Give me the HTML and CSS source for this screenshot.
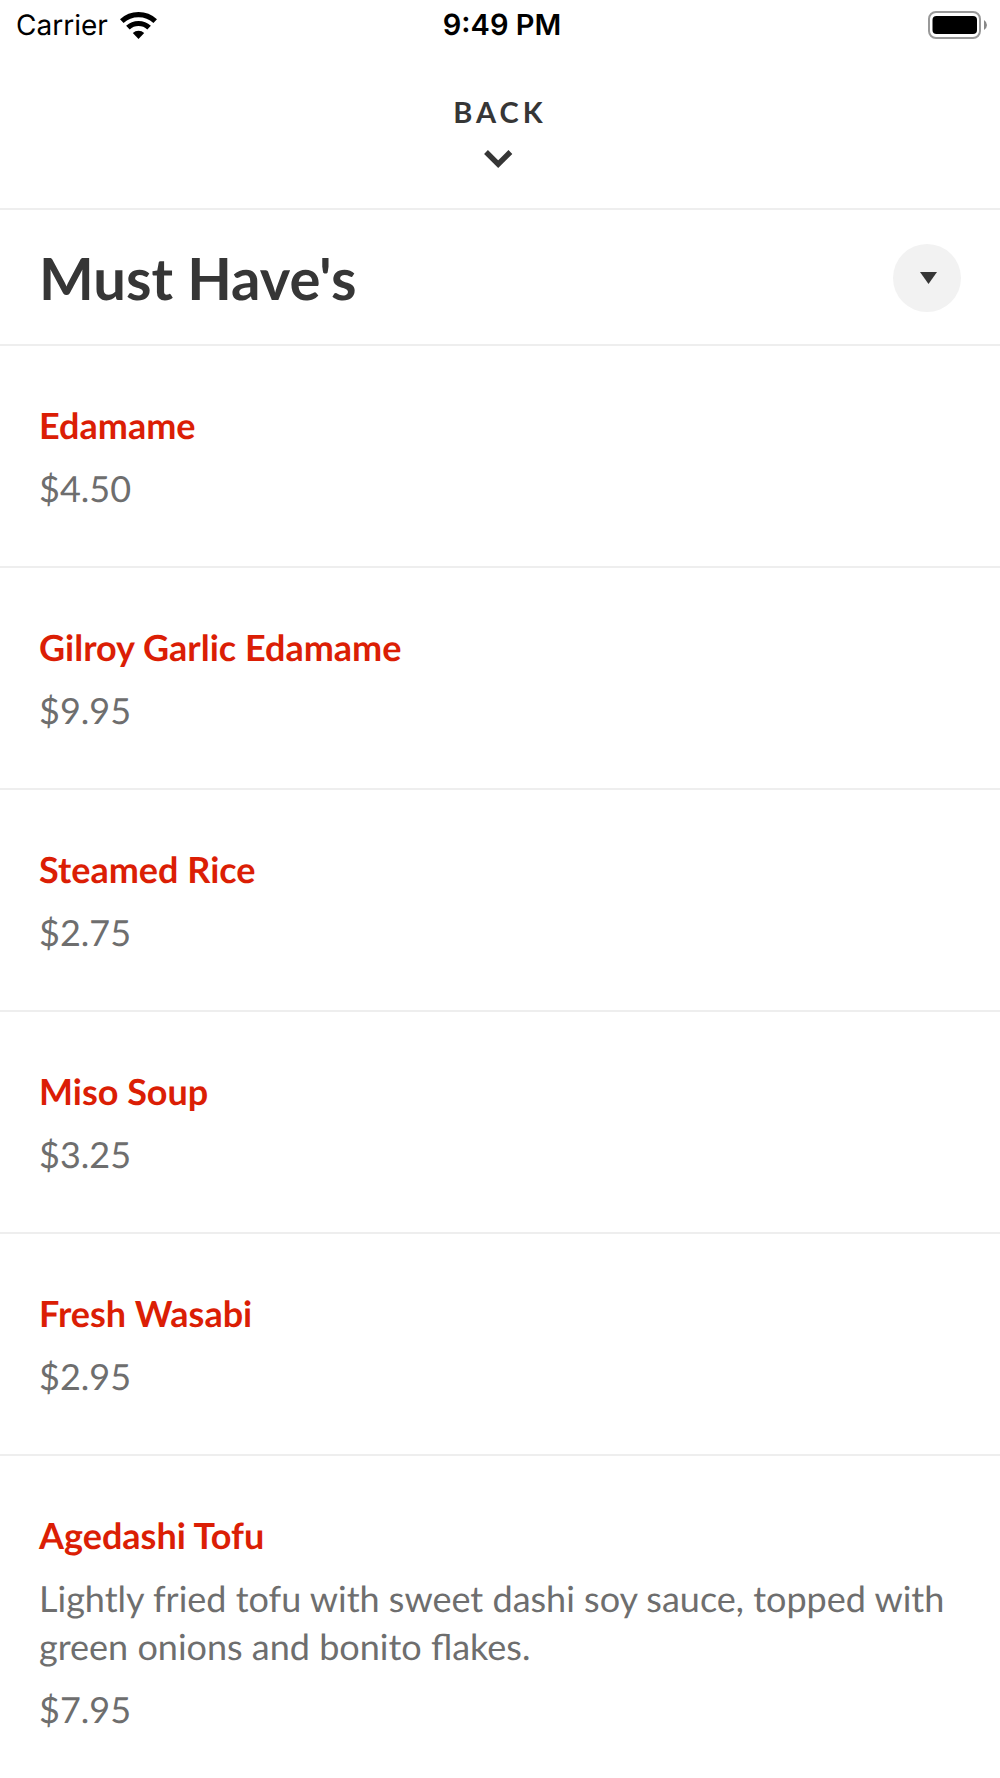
FILE: index.html
```html
<!DOCTYPE html>
<html lang="en">
<head>
<meta charset="utf-8">
<meta name="viewport" content="width=device-width, initial-scale=1">
<title>Must Have's</title>
<link rel="stylesheet" href="styles.css">
</head>
<body>
<div class="status">
  <div class="status-left">
    <span class="carrier">Carrier</span>
    <svg class="wifi" viewBox="0 0 37 27" aria-hidden="true"><path d="M1.800 9.100A24.500 24.500 0 0 1 35.200 9.100M7.900 15.700A15.500 15.500 0 0 1 29.100 15.700" fill="none" stroke="#000" stroke-width="5.200"/><path d="M12.800 20.900A8.300 8.300 0 0 1 24.200 20.900L18.500 27z"/></svg>
  </div>
  <span class="clock">9:49 PM</span>
  <svg class="battery" viewBox="0 0 60 28" aria-hidden="true"><rect x="1" y="1" width="51" height="26" rx="7" fill="none" stroke="#999" stroke-width="2"/><rect x="4.500" y="5" width="44.500" height="18" rx="4"/><path d="M56 9q3 2 3 5t-3 5z" fill="#888"/></svg>
</div>
<header class="top">
  <button class="back" type="button">
    <span class="back-label">BACK</span>
    <svg class="chevron" viewBox="0 0 32 18" aria-hidden="true"><path d="M2 2l12.200 12.200L26.400 2" fill="none" stroke="#363636" stroke-width="5.400"/></svg>
  </button>
</header>
<main>
  <div class="section">
    <h1 class="title">Must Have's</h1>
    <button class="toggle" type="button" aria-label="Choose section"><svg class="caret" viewBox="0 0 20 12" aria-hidden="true"><path d="M3 0h17l-8.500 12z" fill="#363636"/></svg></button>
  </div>
  <ul class="menu">
    <li class="item"><h2 class="name">Edamame</h2><p class="price">$4.50</p></li>
    <li class="item"><h2 class="name">Gilroy Garlic Edamame</h2><p class="price">$9.95</p></li>
    <li class="item"><h2 class="name">Steamed Rice</h2><p class="price">$2.75</p></li>
    <li class="item"><h2 class="name">Miso Soup</h2><p class="price">$3.25</p></li>
    <li class="item"><h2 class="name">Fresh Wasabi</h2><p class="price">$2.95</p></li>
    <li class="item"><h2 class="name">Agedashi Tofu</h2><p class="desc">Lightly fried tofu with sweet dashi soy sauce, topped with green onions and bonito flakes.</p><p class="price">$7.95</p></li>
  </ul>
</main>
</body>
</html>
```
FILE: styles.css
```css
* { box-sizing: border-box; }
body { margin: 0; background: #fff; color: #363636; font-family: Lato, sans-serif; text-rendering: geometricPrecision; }
h1, h2, p, ul { margin: 0; padding: 0; }
button { border: 0; background: none; padding: 0; color: inherit; font: inherit; cursor: pointer; }
svg { display: block; overflow: visible; }
.status { display: grid; grid-template-columns: 1fr auto 1fr; align-items: center; height: 48px; padding: 2px 12px 0 16px; font-family: Inter, sans-serif; font-size: 28px; line-height: 36px; color: #000; }
.status-left { display: flex; align-items: center; gap: 12px; }
.wifi { width: 37px; height: 27px; }
.clock { font-size: 29px; font-weight: 600; }
.battery { width: 60px; height: 28px; justify-self: end; }
.top { display: flex; justify-content: center; height: 162px; padding-top: 46px; border-bottom: 2px solid #eee; }
.back { display: flex; flex-direction: column; align-items: center; gap: 20px; height: 80px; }
.back-label { font-size: 29px; line-height: 36px; font-weight: 700; letter-spacing: 4px; }
.chevron { width: 32px; height: 18px; }
.section { display: flex; align-items: center; justify-content: space-between; height: 136px; padding: 2px 39px 0; border-bottom: 2px solid #eee; }
.title { padding-top: 2px; font-size: 58px; line-height: 72px; font-weight: 700; }
.toggle { display: flex; align-items: center; justify-content: center; width: 68px; height: 68px; border-radius: 50%; background: #f2f2f2; }
.caret { width: 20px; height: 12px; }
.menu { list-style: none; }
.item { padding: 55px 39px 54px; border-bottom: 2px solid #eee; font-size: 36px; line-height: 48px; }
.item:last-child { border-bottom: 0; }
.name { font-size: 36px; line-height: 48px; font-weight: 700; color: #db1e05; }
.desc, .price { margin-top: 15px; color: #6e6e6e; }
```
